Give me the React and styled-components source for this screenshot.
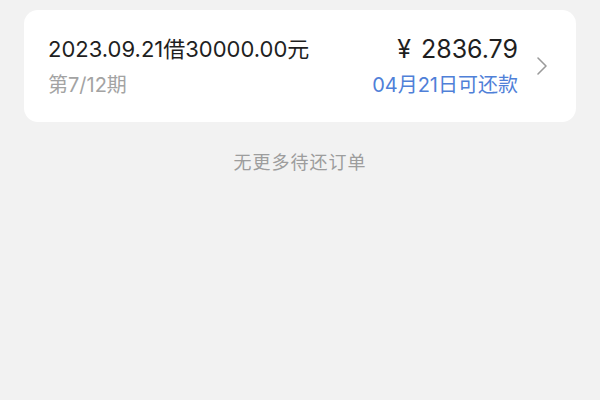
import React from "react";
import styled, { createGlobalStyle } from "styled-components";

const GlobalStyle = createGlobalStyle`
  html, body {
    margin: 0;
    padding: 0;
    background: #f2f2f2;
  }
  body {
    font-family: Inter, "Noto Sans CJK SC", sans-serif;
  }
`;

const Page = styled.div`
  width: 600px;
  min-height: 400px;
  box-sizing: border-box;
  padding: 10px 24px;
  display: flex;
  flex-direction: column;
`;

const Card = styled.div`
  height: 112px;
  box-sizing: border-box;
  background: #fff;
  border-radius: 14px;
  padding: 0 28px 0 24px;
  display: flex;
  align-items: center;
`;

const Info = styled.div`
  flex: 1;
  display: flex;
  flex-direction: column;
  gap: 8px;
`;

const Title = styled.div`
  font-size: 22px;
  line-height: 30px;
  color: #1f1f1f;
`;

const Sub = styled.div`
  font-size: 20px;
  line-height: 26px;
  color: ${(p) => p.color || "#a3a3a3"};
`;

const Amount = styled.div`
  display: flex;
  flex-direction: column;
  align-items: flex-end;
  gap: 8px;
`;

const Money = styled.div`
  font-size: 25px;
  line-height: 30px;
  color: #1f1f1f;
  word-spacing: 3px;
`;

const Arrow = styled.div`
  margin-left: 18px;
  display: flex;
  align-items: center;
`;

const Empty = styled.div`
  margin-top: 26px;
  text-align: center;
  font-size: 18px;
  letter-spacing: 1px;
  color: #9d9d9d;
`;

export default function App() {
  return (
    <>
      <GlobalStyle />
      <Page>
        <Card>
          <Info>
            <Title>2023.09.21借30000.00元</Title>
            <Sub>第7/12期</Sub>
          </Info>
          <Amount>
            <Money>¥ 2836.79</Money>
            <Sub color="#4f80d8">04月21日可还款</Sub>
          </Amount>
          <Arrow>
            <svg width="12" height="20" viewBox="0 0 12 20">
              <path d="M2 2 L10 10 L2 18" fill="none" stroke="#9a9a9a" strokeWidth="1.6" strokeLinecap="round" strokeLinejoin="round" />
            </svg>
          </Arrow>
        </Card>
        <Empty>无更多待还订单</Empty>
      </Page>
    </>
  );
}
